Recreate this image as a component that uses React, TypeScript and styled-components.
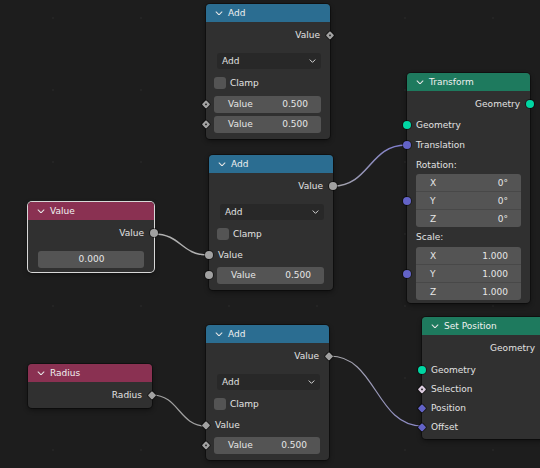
import styled, { createGlobalStyle } from "styled-components";

const GlobalStyle = createGlobalStyle`
  html, body { margin: 0; padding: 0; background: #1d1d1d; }
  body { font-family: "DejaVu Sans", "Liberation Sans", sans-serif; }
`;

const Canvas = styled.div`
  position: relative;
  width: 540px;
  height: 468px;
  overflow: hidden;
  background-color: #1d1d1d;
  background-image: radial-gradient(circle, #242424 1px, transparent 1.5px);
  background-size: 88px 72px;
  background-position: 9px -18px;
`;

const Wires = styled.svg`
  position: absolute;
  left: 0;
  top: 0;
`;

const Node = styled.div<{ $x: number; $y: number; $w: number; $selected?: boolean }>`
  position: absolute;
  left: ${(p) => p.$x}px;
  top: ${(p) => p.$y}px;
  width: ${(p) => p.$w}px;
  background: #303030;
  border-radius: 4px;
  box-shadow: ${(p) =>
    p.$selected
      ? "0 0 0 1px #d8d8d8, 0 2px 5px rgba(0,0,0,0.5)"
      : "0 0 0 1px rgba(0,0,0,0.35), 0 2px 5px rgba(0,0,0,0.45)"};
  font-size: 9px;
  color: #e2e2e2;
`;

const Header = styled.div<{ $tone: string }>`
  display: flex;
  align-items: center;
  gap: 5px;
  height: 18px;
  padding-left: 9px;
  background: ${(p) => p.$tone};
  border-radius: 4px 4px 0 0;
  color: #f0f0f0;
`;

const Body = styled.div<{ $bottom?: number }>`
  display: flex;
  flex-direction: column;
  padding: 3px 0 ${(p) => p.$bottom ?? 5}px;
`;

const Row = styled.div<{ $h?: number; $out?: boolean; $pad?: string }>`
  position: relative;
  display: flex;
  align-items: center;
  justify-content: ${(p) => (p.$out ? "flex-end" : "flex-start")};
  height: ${(p) => p.$h ?? 20}px;
  padding: ${(p) => p.$pad ?? "0 10px 0 9px"};
`;

const Spacer = styled.div<{ $h: number }>`
  height: ${(p) => p.$h}px;
`;

type Kind = "circle" | "diamond" | "field";

const Socket = styled.span<{ $out?: boolean; $kind: Kind; $color: string }>`
  position: absolute;
  top: 50%;
  left: ${(p) => (p.$out ? "100%" : "0")};
  width: ${(p) => (p.$kind === "circle" ? 8 : 5.5)}px;
  height: ${(p) => (p.$kind === "circle" ? 8 : 5.5)}px;
  background: ${(p) => p.$color};
  border-radius: ${(p) => (p.$kind === "circle" ? "50%" : "1px")};
  transform: translate(-50%, -50%) ${(p) => (p.$kind === "circle" ? "" : "rotate(45deg)")};
  box-shadow: 0 0 0 1px rgba(0, 0, 0, 0.45);
  &::after {
    content: "";
    display: ${(p) => (p.$kind === "field" ? "block" : "none")};
    position: absolute;
    left: 50%;
    top: 50%;
    width: 2px;
    height: 2px;
    margin: -1px 0 0 -1px;
    border-radius: 50%;
    background: #2b2b2b;
  }
`;

const Dropdown = styled.div`
  flex: 1;
  display: flex;
  align-items: center;
  justify-content: space-between;
  height: 16px;
  padding: 0 5px;
  background: #282828;
  border-radius: 3px;
  color: #e0e0e0;
`;

const Check = styled.span`
  width: 12px;
  height: 12px;
  margin-right: 4px;
  background: #545454;
  border-radius: 3px;
`;

const Field = styled.div<{ $center?: boolean }>`
  flex: 1;
  display: flex;
  align-items: center;
  justify-content: ${(p) => (p.$center ? "center" : "space-between")};
  height: 17px;
  padding: 0 13px 0 14px;
  background: #545454;
  border-radius: 3px;
  color: #e6e6e6;
`;

const Vector = styled.div`
  flex: 1;
  display: flex;
  flex-direction: column;
  height: 53px;
  margin: 0 9px;
  background: #545454;
  border-radius: 3px;
`;

const VectorRow = styled.div`
  flex: 1;
  display: flex;
  align-items: center;
  justify-content: space-between;
  padding: 0 13px 0 14px;
  color: #e6e6e6;
  & + & {
    border-top: 1px solid rgba(0, 0, 0, 0.14);
  }
`;

const Chevron = ({ size = 8 }: { size?: number }) => (
  <svg width={size} height={size * 0.6} viewBox="0 0 8 5" fill="none">
    <path d="M1 1 L4 4 L7 1" stroke="#e6e6e6" strokeWidth="1.1" strokeLinecap="round" strokeLinejoin="round" />
  </svg>
);

const GRAY = "#a1a1a1";
const GREEN = "#00d6a3";
const PURPLE = "#6363c7";
const PINK = "#dccbde";
const BLUE = "#2b6d91";
const RED = "#8a3152";
const TEAL = "#1e7a5e";

function wire(x1: number, y1: number, x2: number, y2: number) {
  const d = Math.max(Math.abs(x2 - x1) * 0.5, 20);
  return `M${x1} ${y1} C${x1 + d} ${y1}, ${x2 - d} ${y2}, ${x2} ${y2}`;
}

function MathNode({ x, y, w, inSocket, outKind, firstLinked }: {
  x: number; y: number; w: number; inSocket: [Kind, Kind]; outKind: Kind; firstLinked?: boolean;
}) {
  return (
    <Node $x={x} $y={y} $w={w}>
      <Header $tone={BLUE}><Chevron />Add</Header>
      <Body>
        <Row $out>
          Value
          <Socket $out $kind={outKind} $color={GRAY} />
        </Row>
        <Spacer $h={5} />
        <Row $h={22} $pad="0 9px 0 11px">
          <Dropdown>Add<Chevron size={7} /></Dropdown>
        </Row>
        <Row $h={22} $pad="0 8px">
          <Check />Clamp
        </Row>
        {firstLinked ? (
          <Row>
            <Socket $kind={inSocket[0]} $color={GRAY} />
            Value
          </Row>
        ) : (
          <Row $pad="0 9px 0 8px">
            <Socket $kind={inSocket[0]} $color={GRAY} />
            <Field><span>Value</span><span>0.500</span></Field>
          </Row>
        )}
        <Row $pad="0 9px 0 8px">
          <Socket $kind={inSocket[1]} $color={GRAY} />
          <Field><span>Value</span><span>0.500</span></Field>
        </Row>
      </Body>
    </Node>
  );
}

export default function App() {
  return (
    <Canvas>
      <GlobalStyle />
      <Wires width={540} height={468}>
        <defs>
          <linearGradient id="tr" x1="0" y1="0" x2="1" y2="0">
            <stop offset="0" stopColor="#a8a8a8" />
            <stop offset="1" stopColor="#7a78d0" />
          </linearGradient>
          <linearGradient id="of" x1="0" y1="0" x2="1" y2="0">
            <stop offset="0" stopColor="#a8a8a8" />
            <stop offset="1" stopColor="#8a88c8" />
          </linearGradient>
        </defs>
        <path d={wire(333, 186, 406, 145)} stroke="url(#tr)" strokeWidth="1.5" fill="none" />
        <path d={wire(154, 234, 208, 255)} stroke="#b0b0b0" strokeWidth="1.5" fill="none" />
        <path d={wire(152, 395, 206, 426)} stroke="#a0a0a0" strokeWidth="1.2" fill="none" />
        <path d={wire(330, 356, 422, 426)} stroke="url(#of)" strokeWidth="1.2" fill="none" />
      </Wires>

      <MathNode x={206} y={4} w={124} inSocket={["field", "field"]} outKind="field" />
      <MathNode x={209} y={155} w={124} inSocket={["circle", "circle"]} outKind="circle" firstLinked />
      <MathNode x={206} y={325} w={123} inSocket={["diamond", "field"]} outKind="diamond" firstLinked />

      <Node $x={28} $y={202} $w={126} $selected>
        <Header $tone={RED}><Chevron />Value</Header>
        <Body $bottom={2}>
          <Row $out>
            Value
            <Socket $out $kind="circle" $color={GRAY} />
          </Row>
          <Spacer $h={5} />
          <Row $h={22} $pad="0 10px">
            <Field $center>0.000</Field>
          </Row>
        </Body>
      </Node>

      <Node $x={28} $y={364} $w={124}>
        <Header $tone={RED}><Chevron />Radius</Header>
        <Body $bottom={3}>
          <Row $out>
            Radius
            <Socket $out $kind="diamond" $color={GRAY} />
          </Row>
        </Body>
      </Node>

      <Node $x={407} $y={73} $w={123}>
        <Header $tone={TEAL}><Chevron />Transform</Header>
        <Body $bottom={3}>
          <Row $out>
            Geometry
            <Socket $out $kind="circle" $color={GREEN} />
          </Row>
          <Spacer $h={1} />
          <Row>
            <Socket $kind="circle" $color={GREEN} />
            Geometry
          </Row>
          <Row>
            <Socket $kind="circle" $color={PURPLE} />
            Translation
          </Row>
          <Row $h={19}>Rotation:</Row>
          <Row $h={53} $pad="0">
            <Socket $kind="circle" $color={PURPLE} />
            <Vector>
              <VectorRow><span>X</span><span>0°</span></VectorRow>
              <VectorRow><span>Y</span><span>0°</span></VectorRow>
              <VectorRow><span>Z</span><span>0°</span></VectorRow>
            </Vector>
          </Row>
          <Row>Scale:</Row>
          <Row $h={53} $pad="0">
            <Socket $kind="circle" $color={PURPLE} />
            <Vector>
              <VectorRow><span>X</span><span>1.000</span></VectorRow>
              <VectorRow><span>Y</span><span>1.000</span></VectorRow>
              <VectorRow><span>Z</span><span>1.000</span></VectorRow>
            </Vector>
          </Row>
        </Body>
      </Node>

      <Node $x={422} $y={317} $w={123}>
        <Header $tone={TEAL}><Chevron />Set Position</Header>
        <Body $bottom={3}>
          <Row $out>Geometry</Row>
          <Spacer $h={2} />
          <Row $h={19}>
            <Socket $kind="circle" $color={GREEN} />
            Geometry
          </Row>
          <Row $h={19}>
            <Socket $kind="field" $color={PINK} />
            Selection
          </Row>
          <Row $h={19}>
            <Socket $kind="diamond" $color={PURPLE} />
            Position
          </Row>
          <Row $h={19}>
            <Socket $kind="diamond" $color={PURPLE} />
            Offset
          </Row>
        </Body>
      </Node>
    </Canvas>
  );
}
